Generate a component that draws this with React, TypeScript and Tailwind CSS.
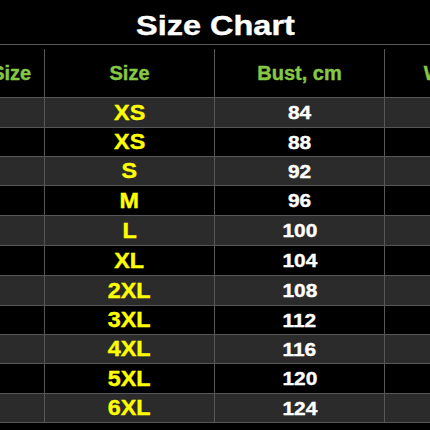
import React from "react";

const rows = [
  { size: "XS", bust: "84", h: "h-[30px]" },
  { size: "XS", bust: "88", h: "h-[29px]" },
  { size: "S", bust: "92", h: "h-[29px]" },
  { size: "M", bust: "96", h: "h-[30px]" },
  { size: "L", bust: "100", h: "h-[30px]" },
  { size: "XL", bust: "104", h: "h-[30px]" },
  { size: "2XL", bust: "108", h: "h-[30px]" },
  { size: "3XL", bust: "112", h: "h-[29px]" },
  { size: "4XL", bust: "116", h: "h-[29px]" },
  { size: "5XL", bust: "120", h: "h-[30px]" },
  { size: "6XL", bust: "124", h: "h-[29px]" },
];

export default function App() {
  return (
    <div
      className="w-[430px] h-[430px] bg-black overflow-hidden font-bold [-webkit-text-stroke:0.4px_currentColor]"
      style={{ fontFamily: '"Liberation Sans", Arial, sans-serif' }}
    >
      <div className="h-[44px] flex items-center justify-center">
        <span className="inline-block text-[28px] leading-none text-white scale-x-[1.16] pt-[7px]">
          Size Chart
        </span>
      </div>

      <div className="flex flex-col">
        <div className="flex h-[54px] border-y border-[#575757] text-[20px] text-[#86c843] pt-[4px]">
          <div className="shrink-0 w-[100px] -ml-[55px] border-r border-[#575757] flex items-center justify-center">
            US Size
          </div>
          <div className="shrink-0 w-[170px] border-r border-[#575757] flex items-center justify-center">
            Size
          </div>
          <div className="shrink-0 w-[170px] border-r border-[#575757] flex items-center justify-center">
            Bust, cm
          </div>
          <div className="shrink-0 w-[170px] flex items-center justify-center">
            Waist, cm
          </div>
        </div>

        {rows.map((r, i) => (
          <div
            key={i}
            className={`flex ${r.h} border-b border-[#575757] ${
              i % 2 === 0 ? "bg-[#2b2b2b]" : "bg-black"
            }`}
          >
            <div className="shrink-0 w-[100px] -ml-[55px] border-r border-[#575757]" />
            <div className="shrink-0 w-[170px] border-r border-[#575757] flex items-center justify-center">
              <span className="inline-block text-[22px] leading-none text-[#ffff00] scale-x-[1.06]">
                {r.size}
              </span>
            </div>
            <div className="shrink-0 w-[170px] border-r border-[#575757] flex items-center justify-center">
              <span className="inline-block text-[19px] leading-none text-white scale-x-[1.1]">
                {r.bust}
              </span>
            </div>
            <div className="shrink-0 w-[170px]" />
          </div>
        ))}
      </div>
    </div>
  );
}
